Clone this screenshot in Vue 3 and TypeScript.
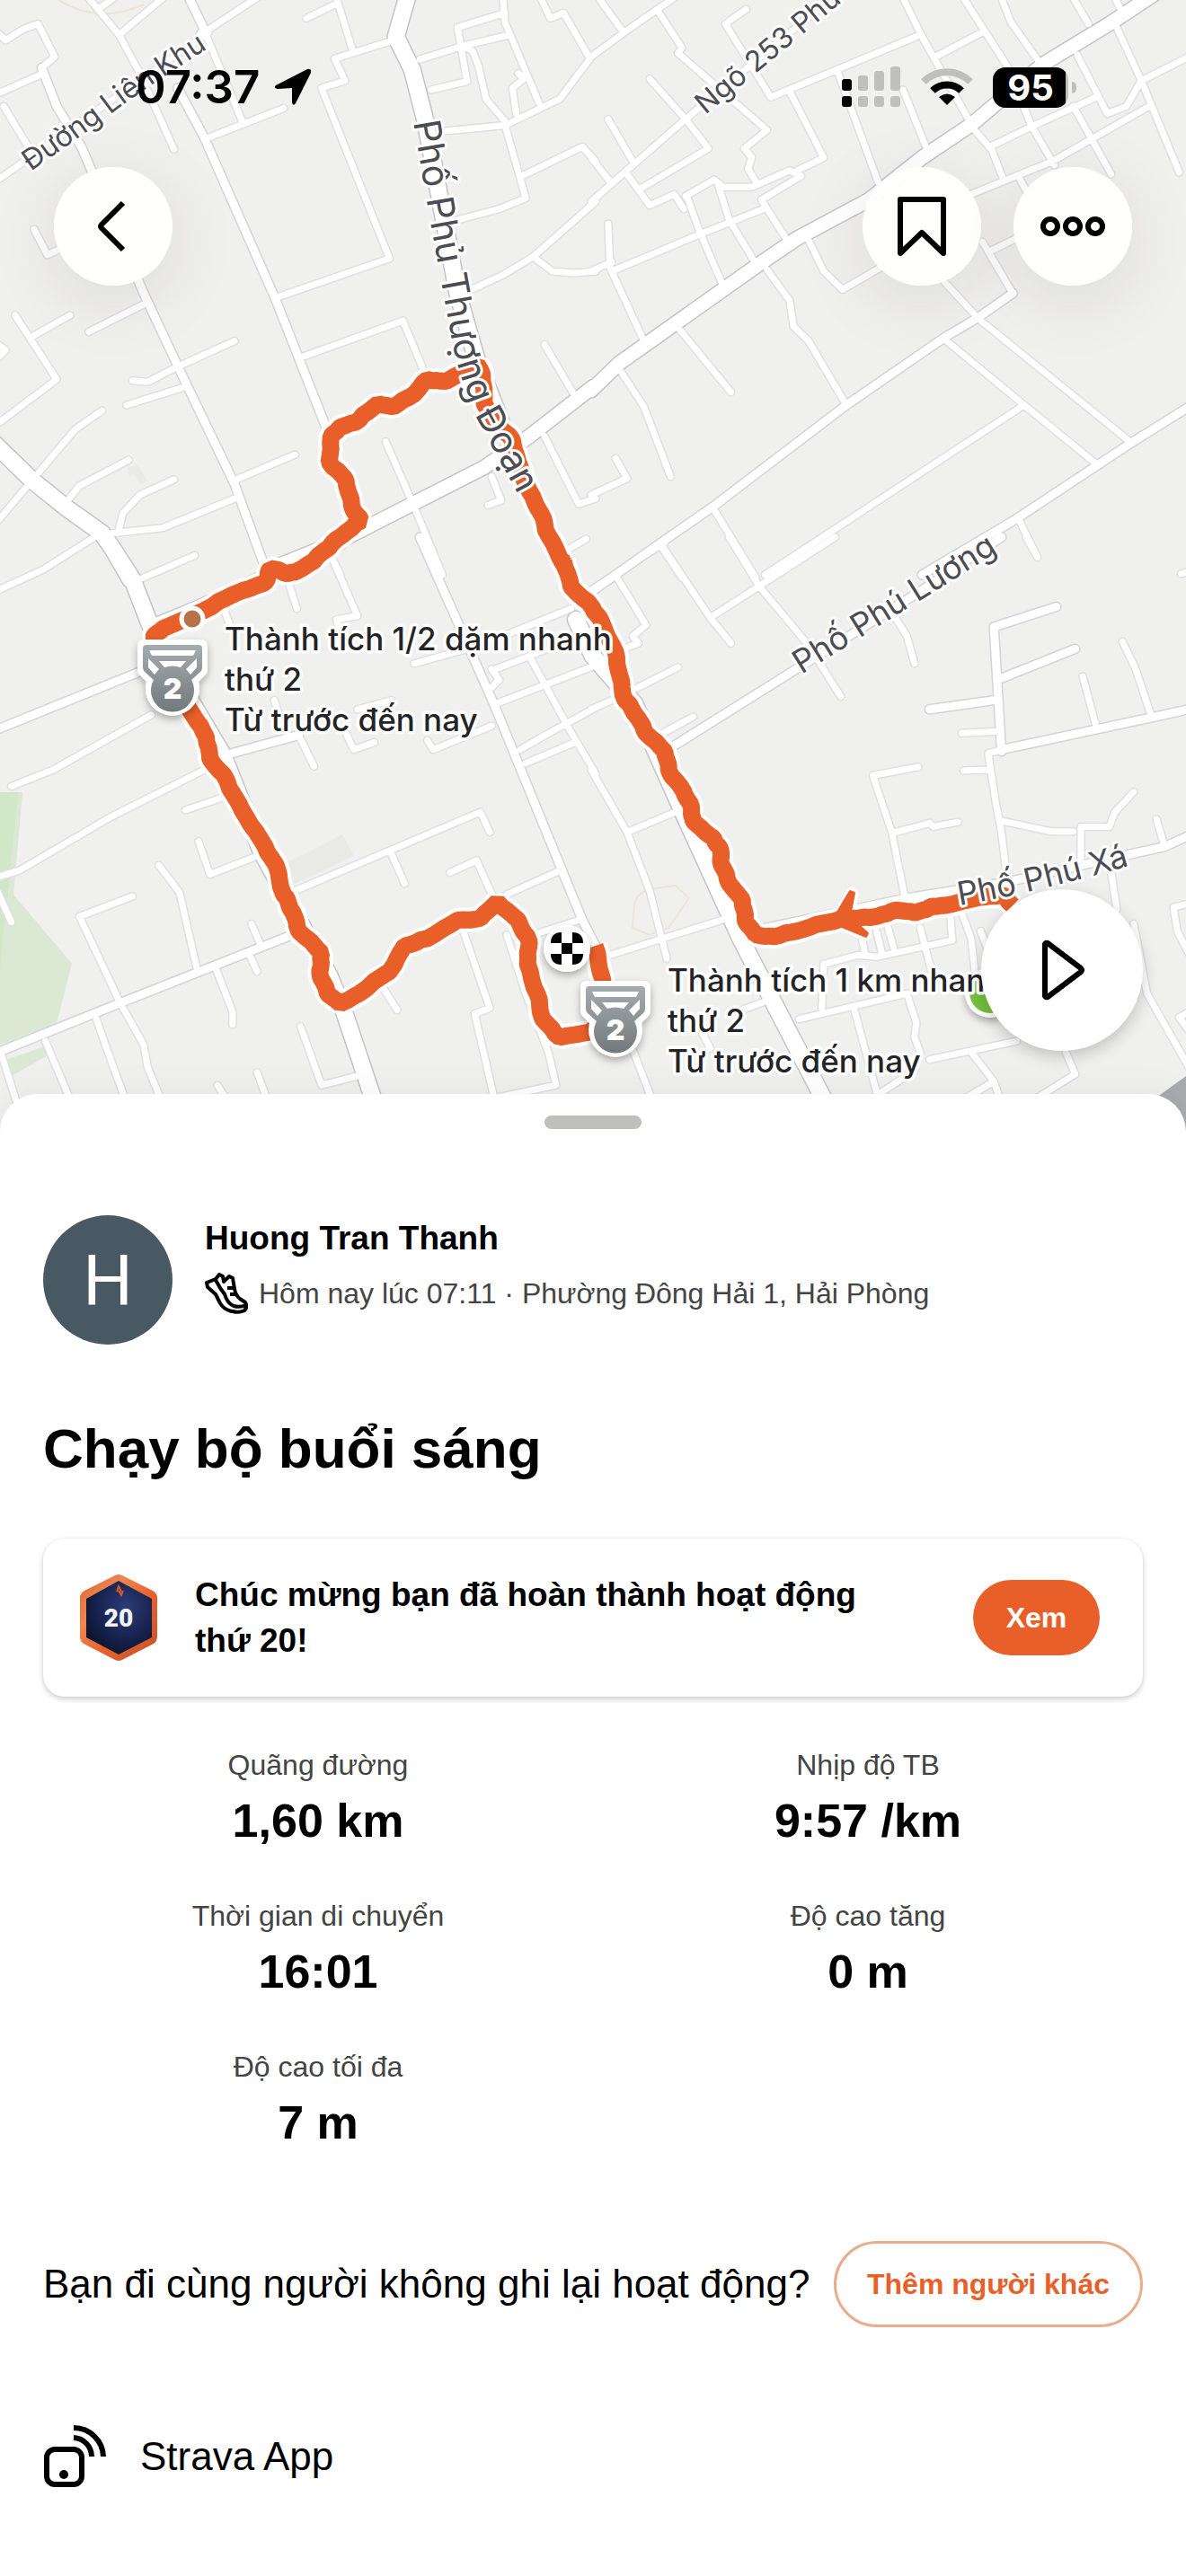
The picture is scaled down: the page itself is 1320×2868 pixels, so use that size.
<script setup lang="ts">
type RoadClass = 'minor' | 'street' | 'avenue' | 'main'
interface Tile {
  x: number
  y: number
  roads: Record<RoadClass, string[]>
}
interface Stat {
  label: string
  value: string
}

// Each tile covers 660 x 640 map units and stores its geometry on a 1568-unit grid.
const EXTENT = 1568
const TILE_W = 660
const TILE_H = 640

const tiles: Tile[] = [
  {
    x: 0,
    y: 0,
    roads: {
      main: [
        '1080,-20 1047,100 1090,190 1125,330 1210,800 1260,980 1400,1350 1500,1568',
        '-20,1205 85,1310 175,1385 270,1455 300,1500 345,1580',
      ],
      avenue: ['1568,1055 1400,1190 1280,1275 1090,1375 900,1475 730,1545'],
      street: [
        '110,185 150,290 215,400 380,800 480,1020 620,1320 705,1560',
        '500,-5 540,80 530,95',
        '470,240 540,375 730,820 860,1160',
      ],
      minor: [
        '235,-5 315,95 370,200 460,407',
        '315,95 430,-5',
        '260,25 300,-5',
        '530,95 700,-20',
        '545,95 640,330',
        '-5,255 115,200',
        '110,185 145,155 100,65 60,80 15,110 -5,90',
        '-5,490 550,90',
        '10,290 80,410',
        '540,380 750,295',
        '730,812 1030,705 850,240 912,220 885,160 1040,110',
        '890,-5 930,130',
        '810,50 890,10',
        '795,975 1065,875 1120,1010',
        '350,1038 390,1042 470,1000 620,930',
        '335,1105 490,1055',
        '235,905 390,825',
        '40,860 150,1035 -5,1155',
        '90,915 185,860',
        '90,625 125,695 180,670',
        '-5,1420 85,1310 200,1170 270,1120',
        '175,1370 210,1325 340,1255',
        '315,1440 325,1400 370,1350 460,1308',
        '290,1455 430,1440 620,1360',
        '620,1310 780,1240',
        '-5,1610 115,1553 250,1465',
        '-5,940 15,955 -5,975',
        '1110,162 1225,125 1340,97',
        '1330,-5 1335,60 1425,280',
        '1210,75 1335,35',
        '1210,75 1235,222 1140,245',
        '1225,125 1250,140 1265,180 1285,270 1335,330',
        '1180,357 1335,342 1480,270 1560,160 1490,35 1455,50 1430,-5',
        '1335,340 1390,540 1320,570 1210,600',
        '1380,480 1540,400 1575,440',
        '1235,795 1330,750 1410,700 1575,550',
        '1410,700 1460,740 1520,745 1575,740',
        '1370,200 1385,215 1355,240 1365,310',
        '1020,1205 1090,1370 1170,1568',
        '1440,940 1520,1080',
        '1440,1190 1530,1375 1575,1360',
        '1300,1300 1325,1365 1290,1378',
        '1500,1500 1550,1470',
        '875,1515 900,1568',
      ],
    },
  },
  {
    x: 660,
    y: 0,
    roads: {
      main: [],
      avenue: [
        '-5,1065 70,990 440,720 540,650 730,545 870,430 1000,340 1190,175 1370,62 1490,-20',
      ],
      street: [
        '1110,800 1020,865 930,920 670,1105 320,1380 180,1480 -5,1615',
        '1575,1110 1420,1210 1120,1415 870,1568',
      ],
      minor: [
        '-5,155 80,90 220,-10',
        '15,-5 75,80',
        '175,35 235,130 225,145 460,355 400,405 420,430 410,460 430,495',
        '405,25 350,65 470,265 645,190 865,95',
        '150,215 245,325 305,405 125,515',
        '630,-5 245,325 -5,550',
        '40,325 105,440',
        '-5,430 45,495',
        '90,475 150,560 215,530 240,570',
        '245,535 320,490 345,510 420,510 520,465 550,480 445,545 510,650',
        '250,540 285,640 340,770',
        '330,500 360,600 425,710',
        '520,250 610,430 540,465',
        '-5,740 50,715',
        '50,740 280,640 450,570',
        '40,610 45,730 130,920',
        '645,190 755,500',
        '820,245 880,400',
        '820,-5 870,100 990,320',
        '905,155 1035,85',
        '980,-5 1095,180 1160,345 1220,450',
        '1080,-5 1105,60 1180,170',
        '1270,-5 1310,65',
        '1380,-5 1395,25',
        '1385,75 1450,220 1550,470',
        '1450,220 1575,155',
        '1280,150 1360,310 1410,290 1450,220',
        '1050,400 1160,345 1330,265',
        '1005,350 1055,410 1085,490',
        '1000,530 1215,440 1470,290',
        '1270,290 1370,475',
        '1130,490 1150,530',
        '570,655 610,740 660,790 760,730',
        '1050,685 1120,650',
        '1030,660 1110,800',
        '460,735 520,820 530,890 570,930 670,1105',
        '930,770 1020,870 1420,1205',
        '935,930 1140,1105 1330,1265',
        '1140,1105 455,1568',
        '1125,1415 1175,1520',
        '230,900 365,1070',
        '75,1015 135,1110 205,1300',
        '60,1250 90,1305 -5,1350',
        '320,1390 430,1575',
        '180,1490 235,1575',
      ],
    },
  },
  {
    x: 0,
    y: 600,
    roads: {
      main: [
        '300,30 350,110 395,230 440,330 590,590 690,850 790,1040 870,1190 910,1290 1000,1568',
      ],
      avenue: ['900,10 540,180 400,240'],
      street: [
        '-20,525 370,362',
        '1110,-5 1220,250 1310,460 1540,1040 1575,1110',
        '-5,1400 320,1265 760,1085',
        '595,590 790,535',
      ],
      minor: [
        '370,110 515,45',
        '760,110 785,190',
        '875,45 945,210 890,220 895,240',
        '595,200 610,240',
        '30,675 140,630 400,480',
        '-5,922 50,905 290,760 540,630',
        '790,535 830,620',
        '725,440 735,470',
        '915,530 935,575 990,555',
        '945,465 1035,440',
        '1095,340 1270,290 1510,190',
        '1310,355 1400,320 1575,245',
        '1400,320 1500,510 1575,640',
        '1310,450 1575,345',
        '1130,550 1145,575 1300,510',
        '1375,575 1425,545 1575,460',
        '1390,612 1520,555',
        '1300,355 1320,385 1300,405',
        '490,740 590,705',
        '780,960 1270,745 1295,800',
        '1035,860 1070,940',
        '1190,910 1260,877 1305,980',
        '1340,970 1480,905',
        '525,825 555,915 680,865',
        '420,890 475,965 520,1170',
        '350,975 210,1030 320,1270 380,1380 390,1440 430,1540',
        '665,1050 690,1110',
        '660,1135 680,1180',
        '570,1170 615,1290 615,1325',
        '255,1310 275,1370 335,1540',
        '120,1370 190,1540',
        '5,1410 45,1540',
        '795,1330 850,1490 945,1465',
        '680,1455 710,1540',
        '575,1490 605,1540',
        '1010,1220 1050,1285',
        '1225,1070 1295,1280 1255,1295 1310,1540',
        '1340,1080 1390,1240 1450,1400 1470,1490 1310,1525',
        '1410,1080 1530,1040',
        '-5,965 30,1045',
      ],
    },
  },
  {
    x: 660,
    y: 600,
    roads: {
      main: ['-45,220 0,320 110,450 240,750 390,1090 490,1290 630,1568'],
      avenue: [],
      street: [
        '205,570 530,360 870,140 1080,-5',
        '1225,185 1060,240 1080,580',
        '1080,380 1275,300',
        '890,465 1060,440',
        '1575,465 1330,520 1080,575',
        '1575,810 1510,840 1420,860 1100,935 830,980 440,1065',
      ],
      minor: [
        '-5,140 60,95 190,10',
        '60,100 140,235 105,265 120,285 80,300',
        '180,15 310,215 365,285',
        '310,215 640,-5',
        '360,-5 440,130 570,290 655,430',
        '800,215 830,265 850,340',
        '1145,-5 1175,50',
        '1575,90 1555,95',
        '975,530 1070,525',
        '1400,280 1435,355 1475,480',
        '1295,375 1330,510',
        '1080,575 1045,585 1065,720 1080,800 1095,930',
        '980,632 1045,630',
        '860,622 740,645 790,800 825,980',
        '800,800 890,775 900,785 965,772',
        '1085,770 1210,798 1270,798',
        '1430,690 1380,745 1365,785 1290,785 1290,880',
        '1490,765 1510,835',
        '1370,910 1385,1010',
        '1575,995 1535,1005 1545,1070 1575,1130',
        '1430,1050 1465,1240 1575,1440',
        '1575,1290 1550,1305 1575,1340',
        '-5,630 90,800 150,960 195,1145',
        '90,800 230,740',
        '30,1140 370,1030',
        '110,410 225,350',
        '-5,465 50,440',
        '175,535 265,485',
        '605,1280 610,1160 700,1135 750,1140 950,1095 945,1030',
        '710,1085 720,1135',
        '750,1070 765,1135',
        '780,1060 795,1115',
        '865,1060 895,1180',
        '975,1020 1000,1090 1010,1180',
        '1025,1070 1040,1110',
        '545,1310 830,1240 855,1320 850,1360 865,1400',
        '890,1420 1120,1370',
        '690,1280 750,1510',
        '380,1290 460,1260',
        '1000,1400 1060,1480 1080,1540',
        '1060,1480 960,1540',
        '740,1525 850,1450',
        '1250,1400 1275,1460 1150,1540',
        '100,1380 160,1540',
        '290,1350 310,1390',
        '605,1500 560,1540',
      ],
    },
  },
]

const routeLegs: [number, string][] = [
  [3, '1110,1000 1085,972 1020,978 930,1000 890,1005 850,1020 800,1012 750,1030 680,1035 590,1052 540,1070 480,1085 430,1080 402,1040 395,985 360,940 340,890 335,840 310,810 265,770 260,730 240,690 200,630 190,580 140,530 120,490 85,440 70,370 60,310 20,220'],
  [2, '1568,190 1510,130 1490,60'],
  [0, '1490,1540 1450,1460 1430,1400 1400,1340 1370,1260 1355,1200 1310,1150 1280,1100 1275,1020 1262,995 1180,1040 1130,1035 1095,1075 1040,1110 1000,1100 950,1145 900,1165 875,1190 870,1260 915,1310 930,1380 955,1420 930,1440 880,1480 830,1530'],
  [2, '800,80 760,95 715,80 700,120 620,150 540,195 430,245 405,270 450,380 510,480 545,540 555,600 600,660 640,740 690,820 730,890 750,970 775,1020 790,1070 850,1130 845,1180 865,1240 900,1268 950,1240 1030,1180 1070,1110 1130,1090 1210,1040 1270,1035 1315,990 1370,1040 1400,1100 1395,1160 1420,1240 1435,1310 1480,1360 1560,1345'],
  [3, '25,1320 25,1200 5,1110'],
]

function project(tile: Tile, points: string): number[][] {
  return points.split(' ').map((pair) => {
    const [x, y] = pair.split(',').map(Number)
    return [tile.x + (x * TILE_W) / EXTENT, tile.y + (y * TILE_H) / EXTENT]
  })
}

function toPath(points: number[][]): string {
  return 'M' + points.map(([x, y]) => `${x.toFixed(1)} ${y.toFixed(1)}`).join('L')
}

const widths: Record<RoadClass, number> = { minor: 7, street: 9, avenue: 15, main: 18 }
const classes: RoadClass[] = ['minor', 'street', 'avenue', 'main']
const roads = classes.map((kind) => ({
  kind,
  width: widths[kind],
  d: tiles.map((t) => t.roads[kind].map((r) => toPath(project(t, r))).join('')).join(''),
}))

function roughen(points: number[][]): number[][] {
  const out: number[][] = []
  points.forEach((p, i) => {
    out.push(p)
    const next = points[i + 1]
    if (!next) return
    for (let k = 1; k < 4; k++) {
      const wobble = Math.sin(i * 7 + k * 5)
      out.push([
        p[0] + ((next[0] - p[0]) * k) / 4 + wobble,
        p[1] + ((next[1] - p[1]) * k) / 4 + wobble * Math.cos(i * 3 + k),
      ])
    }
  })
  return out
}
const routePath = toPath(roughen(routeLegs.flatMap(([t, pts]) => project(tiles[t], pts))))

const medals = [
  { x: 153, y: 712, lines: ['Thành tích 1/2 dặm nhanh', 'thứ 2', 'Từ trước đến nay'], tx: 250, ty: 724 },
  { x: 646, y: 1092, lines: ['Thành tích 1 km nhanh', 'thứ 2', 'Từ trước đến nay'], tx: 743, ty: 1104 },
]

const stats: Stat[] = [
  { label: 'Quãng đường', value: '1,60 km' },
  { label: 'Nhịp độ TB', value: '9:57 /km' },
  { label: 'Thời gian di chuyển', value: '16:01' },
  { label: 'Độ cao tăng', value: '0 m' },
  { label: 'Độ cao tối đa', value: '7 m' },
]
</script>

<template>
  <main class="screen">
    <section class="hero">
      <svg class="map" viewBox="0 0 1320 1260" role="img" aria-label="Bản đồ lộ trình">
        <defs>
          <linearGradient id="silver" x1="0" y1="0" x2="0" y2="1">
            <stop offset="0" stop-color="#a4acaf" />
            <stop offset="1" stop-color="#72797d" />
          </linearGradient>
          <filter id="drop" x="-30%" y="-30%" width="160%" height="170%">
            <feDropShadow dx="0" dy="4" stdDeviation="4" flood-opacity="0.3" />
          </filter>
          <path id="street-lien-khu" d="M34 191Q90 152 130 122T260 36" />
          <path id="street-253" d="M785 128L1000 -50" />
          <path id="street-thuong-doan" d="M460 136L480 253L500 362Q508 415 533 470L600 594" />
          <path id="street-phu-luong" d="M892 751L1150 590" />
          <path id="street-phu-xa" d="M1068 1008Q1165 992 1300 951" />
        </defs>
        <rect width="1320" height="1260" fill="#f0f0ef" />
        <path d="M0 882H25L15 996L80 1073L63 1139L0 1163Z" fill="#dbe8d4" />
        <path d="M0 882H20L8 1000L0 1080Z" fill="#d2e6c8" />
        <path d="M4 1181L50 1165L53 1175L13 1198Z" fill="#dbe8d4" />
        <path d="M320 960L381 929L394 953L328 984Z" fill="#e9e9e6" />
        <path d="M142 521L152 517L164 535L156 540L150 528L144 530Z" fill="#e9e9e6" />
        <path d="M706 1008Q708 994 723 990L752 986L767 1000L744 1033L723 1041L704 1033Z" fill="none" stroke="#eee5da" stroke-width="2" />
        <path d="M65 0Q110 28 160 5" fill="none" stroke="#eee5da" stroke-width="2" />
        <path d="M1287 1222L1320 1198V1260H1287Z" fill="#a9aaad" />

        <g fill="none" stroke-linecap="round" stroke-linejoin="round">
          <path v-for="r in roads" :key="r.kind" :d="r.d" :stroke-width="r.width + 3" :class="['casing', r.kind]" />
          <path v-for="r in roads" :key="r.kind" :d="r.d" :stroke-width="r.width" stroke="#fff" />
        </g>

        <g fill="none" stroke-linejoin="bevel">
          <path :d="routePath" stroke="#fff" stroke-width="27" />
          <path d="M926 1027L948 990L952 994L947 1021L967 1040L964 1044Z" stroke="#fff" stroke-width="8" fill="#fff" />
          <path :d="routePath" stroke="#e85f2a" stroke-width="19" />
          <path d="M925 1027L946 992L951 994L946 1021L966 1039L964 1043Z" stroke="#e85f2a" stroke-width="2" fill="#e85f2a" />
        </g>

        <circle cx="1102" cy="1105" r="28" fill="#fff" filter="url(#drop)" />
        <circle cx="1102" cy="1105" r="23" fill="#75c23e" />
        <circle cx="214" cy="689" r="12" fill="#b87247" stroke="#fff" stroke-width="5" />
        <circle cx="631" cy="1056" r="26" fill="#fff" filter="url(#drop)" />
        <path d="M625 1038V1050H613Q613 1038 625 1038M637 1038V1050H649Q649 1038 637 1038M625 1074V1062H613Q613 1074 625 1074M637 1074V1062H649Q649 1074 637 1074M625 1050H637V1062H625Z" fill="#000" />

        <g class="street-label">
          <text class="lane"><textPath href="#street-lien-khu">Đường Liên Khu</textPath></text>
          <text class="lane"><textPath href="#street-253">Ngõ 253 Phủ</textPath></text>
          <text class="artery"><textPath href="#street-thuong-doan">Phố Phủ Thượng Đoạn</textPath></text>
          <text><textPath href="#street-phu-luong">Phố Phú Lương</textPath></text>
          <text><textPath href="#street-phu-xa">Phố Phú Xá</textPath></text>
        </g>

        <g v-for="m in medals" :key="m.x">
          <g :transform="`translate(${m.x} ${m.y})`">
            <path d="M8 0H70Q78 0 78 8V33Q78 37 75 40L68 47A30 30 0 1 1 10 47L3 40Q0 37 0 33V8Q0 0 8 0Z" fill="#fff" filter="url(#drop)" />
            <path d="M10 6H68Q72 6 72 10V31Q72 34 70 36L60 45A24 24 0 1 1 18 45L8 36Q6 34 6 31V10Q6 6 10 6Z" fill="url(#silver)" />
            <path d="M13 12H65L62 18H16Z M24 24H54L48 31Q39 28 30 31Z M12 21L24 33L19 39L12 31Z M66 21L54 33L59 39L66 31Z" fill="#fff" />
            <text x="39" y="66" class="medal-rank">2</text>
          </g>
          <text class="achievement">
            <tspan v-for="(line, i) in m.lines" :key="line" :x="m.tx" :y="m.ty + i * 45">{{ line }}</tspan>
          </text>
        </g>
      </svg>

      <header class="overlay">
        <div class="status">
          <div class="clock">
            <span>07:37</span>
            <svg width="42" height="42" viewBox="0 0 42 42" aria-hidden="true">
              <path d="M2 19L37 1Q42 0 41 5L24 39Q21 43 20 38V22L4 23Q-1 22 2 19Z" />
            </svg>
          </div>
          <div class="indicators">
            <svg width="66" height="46" viewBox="0 0 66 46" aria-hidden="true">
              <g fill="#bfbfbe">
                <rect x="18" y="10" width="11" height="17" rx="3" />
                <rect x="36" y="5" width="11" height="22" rx="3" />
                <rect x="54" y="0" width="11" height="27" rx="3" />
                <rect x="18" y="33" width="11" height="12" rx="3" />
                <rect x="36" y="33" width="11" height="12" rx="3" />
                <rect x="54" y="33" width="11" height="12" rx="3" />
              </g>
              <rect x="0" y="14" width="11" height="13" rx="3" />
              <rect x="0" y="33" width="11" height="12" rx="3" />
            </svg>
            <svg width="58" height="42" viewBox="0 0 58 42" aria-hidden="true">
              <path d="M3 15A37 37 0 0 1 55 15" fill="none" stroke="#bfbfbe" stroke-width="8" />
              <path d="M13 25A23 23 0 0 1 45 25" fill="none" stroke="#000" stroke-width="8" />
              <path d="M20 32Q29 25 38 32L29 41Z" />
            </svg>
            <div class="battery"><span>95</span></div>
          </div>
        </div>
        <nav class="toolbar">
          <button type="button" class="round" aria-label="Quay lại">
            <svg width="66" height="66" viewBox="0 0 66 66"><path d="M44 7L20 31Q18 33 20 35L44 59" /></svg>
          </button>
          <div class="actions">
            <button type="button" class="round" aria-label="Lưu">
              <svg width="66" height="72" viewBox="0 0 66 72"><path d="M9 6H57V66L33 43L9 66Z" /></svg>
            </button>
            <button type="button" class="round" aria-label="Thêm">
              <svg width="78" height="30" viewBox="0 0 78 30">
                <circle cx="14" cy="15" r="8" /><circle cx="39" cy="15" r="8" /><circle cx="64" cy="15" r="8" />
              </svg>
            </button>
          </div>
        </nav>
      </header>

      <button type="button" class="play" aria-label="Phát">
        <svg width="54" height="72" viewBox="0 0 54 72"><path d="M8 7V65Q9 67 11 66L48 38Q50 36 48 34L11 6Q9 5 8 7Z" /></svg>
      </button>
    </section>

    <section class="sheet">
      <div class="handle"></div>

      <div class="athlete">
        <div class="avatar">H</div>
        <div class="who">
          <div class="name">Huong Tran Thanh</div>
          <div class="meta">
            <svg width="48" height="46" viewBox="0 0 48 46" aria-hidden="true">
              <path d="M2 11L12 7L16 2L20 4L21 10L27 4L31 6L33 18Q34 25 39 29L45 33Q48 38 44 42Q38 45 31 43Q22 42 17 34L12 24L3 16Z" />
              <path d="M12 8L17 17L22 24Q25 34 32 37Q39 39 46 36M25 17H33M28 24H35" />
            </svg>
            <span>Hôm nay lúc 07:11 · Phường Đông Hải 1, Hải Phòng</span>
          </div>
        </div>
      </div>

      <h1>Chạy bộ buổi sáng</h1>

      <div class="card">
        <svg class="hex" width="86" height="96" viewBox="0 0 86 96" aria-hidden="true">
          <defs>
            <linearGradient id="rim" x1="0" y1="0" x2="1" y2="1">
              <stop offset="0" stop-color="#d96536" />
              <stop offset="0.3" stop-color="#f0864f" />
              <stop offset="0.6" stop-color="#e8602b" />
              <stop offset="1" stop-color="#c2512a" />
            </linearGradient>
            <radialGradient id="night" cx="0.6" cy="0.35" r="0.7">
              <stop offset="0" stop-color="#2b3c78" />
              <stop offset="0.6" stop-color="#172350" />
              <stop offset="1" stop-color="#0b142c" />
            </radialGradient>
          </defs>
          <path d="M39 1Q43 -1 47 1L81 18Q86 21 86 26V69Q86 74 82 77L47 95Q43 97 39 95L4 77Q0 74 0 69V26Q0 21 5 18Z" fill="url(#rim)" />
          <path d="M43 7L80 27V70L43 89L7 70V27Z" fill="url(#night)" />
          <path d="M41 19L43 13L46 19M43 18L46 23L48 18" fill="none" stroke="#d95a2a" stroke-width="2" />
          <text x="43" y="58" text-anchor="middle">20</text>
        </svg>
        <p>Chúc mừng bạn đã hoàn thành hoạt động thứ 20!</p>
        <button type="button" class="primary">Xem</button>
      </div>

      <dl class="stats">
        <div v-for="s in stats" :key="s.label">
          <dt>{{ s.label }}</dt>
          <dd>{{ s.value }}</dd>
        </div>
      </dl>

      <div class="invite">
        <span>Bạn đi cùng người không ghi lại hoạt động?</span>
        <button type="button" class="outline">Thêm người khác</button>
      </div>

      <div class="source">
        <svg width="72" height="72" viewBox="0 0 72 72" aria-hidden="true">
          <rect x="4" y="28" width="39" height="39" rx="9" />
          <circle cx="23" cy="56" r="5" class="dot" />
          <path d="M34 15A21 21 0 0 1 54 36M34 4A33 33 0 0 1 67 36" />
        </svg>
        <span>Strava App</span>
      </div>
    </section>
  </main>
</template>

<style>
body {
  margin: 0;
  background: #fff;
}
</style>

<style scoped>
.screen {
  font-family: "Liberation Sans", Arial, sans-serif;
  color: #000;
  background: #fff;
}
button {
  border: 0;
  padding: 0;
  margin: 0;
  font: inherit;
  display: flex;
  align-items: center;
  justify-content: center;
  flex: none;
}
.hero {
  position: relative;
}
.map {
  display: block;
  width: 100%;
  height: auto;
}
.casing {
  stroke: #dfdfe3;
}
.casing.street {
  stroke: #d3d4d8;
}
.casing.avenue,
.casing.main {
  stroke: #c3c4ca;
}
.street-label {
  font: 400 36px Inter, sans-serif;
  fill: #4b4c54;
  stroke: #fff;
  stroke-width: 6px;
  stroke-linejoin: round;
  paint-order: stroke;
}
.street-label .lane {
  font-size: 32px;
}
.street-label .artery {
  font-size: 41px;
}
.achievement {
  font: 500 35px Inter, sans-serif;
  fill: #242428;
  stroke: #fff;
  stroke-width: 7px;
  stroke-linejoin: round;
  paint-order: stroke;
}
.medal-rank {
  font: 900 32px Inter, sans-serif;
  fill: #fff;
  text-anchor: middle;
}
.overlay {
  position: absolute;
  top: 0;
  left: 0;
  right: 0;
}
.status {
  display: flex;
  justify-content: space-between;
  align-items: center;
  padding: 64px 131px 56px 151px;
  height: 66px;
}
.clock {
  display: flex;
  align-items: center;
  gap: 16px;
  font: 600 51px/66px Inter, sans-serif;
}
.indicators {
  display: flex;
  align-items: center;
  gap: 22px;
}
.battery {
  position: relative;
  width: 84px;
  height: 45px;
  border-radius: 14px;
  background: linear-gradient(to right, #000 81px, #bfbfbe 81px);
  color: #fff;
  font: 700 40px/45px Inter, sans-serif;
  text-align: center;
}
.battery::after {
  content: "";
  position: absolute;
  right: -9px;
  top: 16px;
  width: 5px;
  height: 13px;
  border-radius: 0 5px 5px 0;
  background: #bfbfbe;
}
.toolbar {
  display: flex;
  justify-content: space-between;
  padding: 0 60px;
}
.actions {
  display: flex;
  gap: 36px;
}
.round {
  width: 132px;
  height: 132px;
  border-radius: 50%;
  background: rgba(255, 255, 253, 0.95);
  box-shadow: 0 16px 80px rgba(40, 30, 30, 0.1);
}
.round svg,
.play svg {
  fill: none;
  stroke: #000;
  stroke-width: 6px;
  stroke-linejoin: round;
}
.play {
  position: absolute;
  right: 48px;
  bottom: 90px;
  width: 180px;
  height: 180px;
  border-radius: 50%;
  background: #fff;
  box-shadow: 0 6px 18px rgba(0, 0, 0, 0.2);
}
.sheet {
  position: relative;
  margin-top: -42px;
  padding: 24px 48px 96px;
  border-radius: 42px 42px 0 0;
  background: #fff;
  box-shadow: 0 -4px 40px rgba(0, 0, 0, 0.05);
}
.handle {
  width: 108px;
  height: 15px;
  margin: 0 auto;
  border-radius: 8px;
  background: #bfc0bb;
}
.athlete {
  display: flex;
  gap: 36px;
  margin-top: 96px;
}
.avatar {
  width: 144px;
  height: 144px;
  flex: none;
  border-radius: 50%;
  background: #495963;
  color: #fff;
  font: 400 78px/148px Roboto, sans-serif;
  text-align: center;
}
.name {
  font-size: 37px;
  font-weight: 700;
  line-height: 52px;
}
.meta {
  display: flex;
  align-items: center;
  gap: 12px;
  margin-top: 12px;
  font-size: 32px;
  line-height: 44px;
  color: #444;
}
.meta svg {
  flex: none;
  fill: none;
  stroke: #000;
  stroke-width: 4px;
  stroke-linejoin: round;
}
h1 {
  margin: 76px 0 0;
  font-size: 62px;
  line-height: 80px;
  font-weight: 700;
}
.card {
  display: flex;
  align-items: center;
  margin-top: 60px;
  padding: 36px 48px 36px 41px;
  border-radius: 24px;
  background: #fff;
  box-shadow: 0 3px 6px rgba(0, 0, 0, 0.18), 0 0 3px rgba(0, 0, 0, 0.08);
}
.hex {
  flex: none;
}
.hex text {
  font: 900 28px Roboto, sans-serif;
  fill: #f2f2f2;
}
.card p {
  flex: 1;
  margin: 0 120px 0 42px;
  padding: 1px 0;
  font-size: 37px;
  font-weight: 700;
  line-height: 51px;
}
.primary {
  width: 141px;
  height: 84px;
  border-radius: 42px;
  background: #e85f2a;
  color: #fff;
  font-size: 32px;
  font-weight: 700;
}
.stats {
  display: grid;
  grid-template-columns: 1fr 1fr;
  row-gap: 52px;
  margin: 54px 0 0;
  text-align: center;
}
.stats dt {
  font-size: 32px;
  line-height: 44px;
  color: #444;
}
.stats dd {
  margin: 8px 0 0;
  font-size: 52px;
  line-height: 64px;
  font-weight: 700;
}
.invite {
  display: flex;
  align-items: center;
  justify-content: space-between;
  margin-top: 100px;
  font-size: 44px;
  line-height: 60px;
}
.outline {
  box-sizing: border-box;
  width: 344px;
  height: 96px;
  border: 3px solid #e9ad8c;
  border-radius: 48px;
  background: #fff;
  color: #e85f2a;
  font-size: 32px;
  font-weight: 700;
}
.source {
  display: flex;
  align-items: center;
  gap: 36px;
  margin-top: 108px;
  font-size: 44px;
  line-height: 60px;
}
.source svg {
  fill: none;
  stroke: #000;
  stroke-width: 6px;
}
.source .dot {
  fill: #000;
  stroke: none;
}
</style>
